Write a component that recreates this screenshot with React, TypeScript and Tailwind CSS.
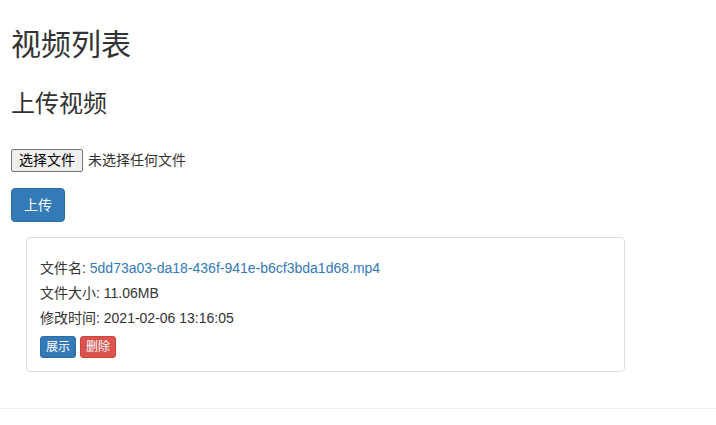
const font = '"Liberation Sans", "Noto Sans CJK SC", sans-serif';

type VideoFile = {
  name: string;
  size: string;
  modified: string;
};

const files: VideoFile[] = [
  {
    name: "5dd73a03-da18-436f-941e-b6cf3bda1d68.mp4",
    size: "11.06MB",
    modified: "2021-02-06 13:16:05",
  },
];

function FileCard({ file }: { file: VideoFile }) {
  return (
    <div className="ml-[15px] w-[599px] rounded-[4px] border border-[#ddd] bg-white px-[13px] pt-[18px] pb-[13px]">
      <div className="text-[14px] leading-[25px]">
        文件名: <a className="text-[#337ab7]">{file.name}</a>
      </div>
      <div className="text-[14px] leading-[25px]">文件大小: {file.size}</div>
      <div className="text-[14px] leading-[25px]">修改时间: {file.modified}</div>
      <div className="mt-[5px] flex gap-[4px]">
        <button className="rounded-[3px] border border-[#2e6da4] bg-[#337ab7] px-[5px] py-[1px] text-[12px] leading-[18px] text-white">
          展示
        </button>
        <button className="rounded-[3px] border border-[#d43f3a] bg-[#d9534f] px-[5px] py-[1px] text-[12px] leading-[18px] text-white">
          删除
        </button>
      </div>
    </div>
  );
}

export default function App() {
  return (
    <div className="min-h-[425px] bg-white text-[#333]" style={{ fontFamily: font }}>
      <div className="px-[11px] pt-[28px]">
        <h1 className="text-[30px] leading-[33px] font-normal">视频列表</h1>
        <h3 className="mt-[30px] text-[24px] leading-[26px] font-normal">上传视频</h3>

        {/* file picker */}
        <div className="mt-[32px] flex items-center text-[14px]">
          <button className="h-[23px] rounded-[2px] border border-[#767676] bg-[#efefef] px-[7px] leading-[17px] text-black">
            选择文件
          </button>
          <span className="ml-[5px]">未选择任何文件</span>
        </div>

        <button className="mt-[16px] h-[34px] rounded-[4px] border border-[#2e6da4] bg-[#337ab7] px-[12px] text-[14px] leading-[20px] text-white">
          上传
        </button>

        <div className="mt-[15px]">
          {files.map((f) => (
            <FileCard key={f.name} file={f} />
          ))}
        </div>
      </div>

      <hr className="mt-[36px] border-t border-[#eee]" />
    </div>
  );
}
